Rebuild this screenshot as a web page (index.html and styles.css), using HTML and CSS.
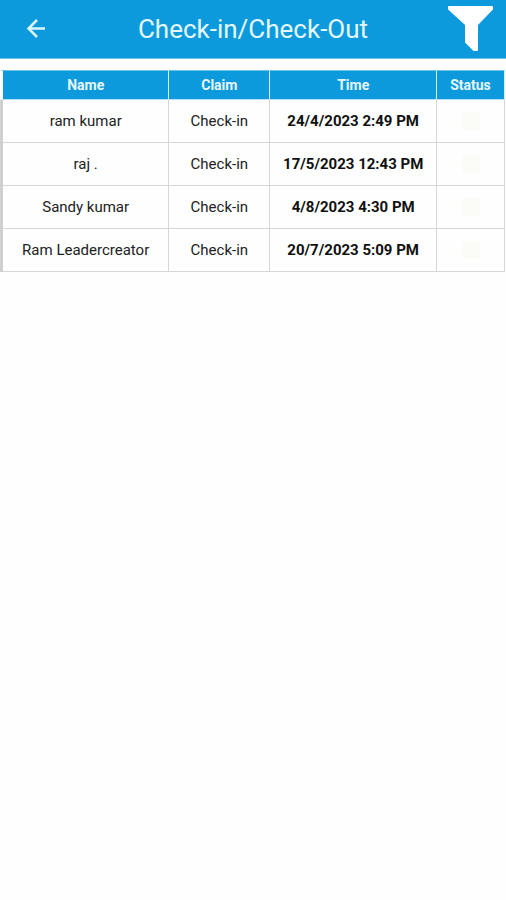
FILE: index.html
```html
<!DOCTYPE html>
<html lang="en">
<head>
    <meta charset="UTF-8">
    <meta name="viewport" content="width=device-width, initial-scale=1.0">
    <title>Check-in/Check-Out</title>
    <link rel="stylesheet" href="styles.css">
</head>
<body>

    <header class="topbar">
        <button class="back" aria-label="Back">
            <svg width="20" height="20" viewBox="0 0 20 20" fill="none" stroke="currentColor" stroke-width="2.5">
                <path d="M19 9.5H2M11 1L2.5 9.5L11 18"/>
            </svg>
        </button>
        <h1>Check-in/Check-Out</h1>
        <button class="filter" aria-label="Filter">
            <svg width="46" height="46" viewBox="0 0 46 46" fill="currentColor" stroke="currentColor" stroke-width="2" stroke-linejoin="round">
                <path d="M1 1H44V3L29 18.5V44H26L18 36V18.5L1 3Z"/>
            </svg>
        </button>
    </header>

    <table class="log">
        <thead>
            <tr>
                <th class="name">Name</th>
                <th class="claim">Claim</th>
                <th class="time">Time</th>
                <th class="status">Status</th>
            </tr>
        </thead>
        <tbody>
            <tr>
                <td>ram kumar</td>
                <td>Check-in</td>
                <td class="date">24/4/2023 2:49 PM</td>
                <td><span class="mark"></span></td>
            </tr>
            <tr>
                <td>raj .</td>
                <td>Check-in</td>
                <td class="date">17/5/2023 12:43 PM</td>
                <td><span class="mark"></span></td>
            </tr>
            <tr>
                <td>Sandy kumar</td>
                <td>Check-in</td>
                <td class="date">4/8/2023 4:30 PM</td>
                <td><span class="mark"></span></td>
            </tr>
            <tr>
                <td>Ram Leadercreator</td>
                <td>Check-in</td>
                <td class="date">20/7/2023 5:09 PM</td>
                <td><span class="mark"></span></td>
            </tr>
        </tbody>
    </table>

</body>
</html>
```

FILE: styles.css
```css
* {
    box-sizing: border-box;
}
body {
    margin: 0;
    background-color: #fefefe;
    font-family: Roboto, "Liberation Sans", sans-serif;
    color: #222;
}
.topbar {
    display: grid;
    grid-template-columns: 64px 1fr 64px;
    align-items: center;
    height: 59px;
    background-color: #0d9adc;
    border-bottom: 1px solid #6cc4ec;
    color: #fff;
}
.topbar h1 {
    margin: 0;
    font-size: 26px;
    font-weight: 400;
    line-height: 32px;
    text-align: center;
    color: #e4f8ff;
}
.topbar button {
    display: flex;
    padding: 0;
    border: none;
    background: none;
    color: inherit;
    cursor: pointer;
}
.topbar .back {
    justify-self: center;
    margin-left: 8px;
    color: #d9f5ff;
}
.topbar .filter {
    justify-self: start;
    margin-left: 6px;
}
.log {
    width: 100%;
    margin-top: 11px;
    padding-right: 1px;
    table-layout: fixed;
    border-collapse: separate;
    border-spacing: 0;
    font-size: 15px;
    line-height: 20px;
    text-align: center;
}
.log th {
    height: 30px;
    padding: 0;
    background-color: #0d9adc;
    background-clip: padding-box;
    border-top: 1px solid #6cc4ec;
    border-right: 1px solid #d5effa;
    border-bottom: 1px solid #b5dff3;
    font-size: 14px;
    font-weight: 700;
    color: #e6f8ff;
}
.log th:first-child {
    border-left: 3px solid transparent;
}
.log td {
    height: 43px;
    padding: 0;
    border-right: 1px solid #d6d6d6;
    border-bottom: 1px solid #d6d6d6;
}
.log td:first-child {
    border-left: 3px solid #d0d0d0;
}
.log .date {
    font-weight: 700;
    color: #111;
}
.claim {
    width: 20%;
}
.time {
    width: 33%;
}
.status {
    width: 68px;
}
.mark {
    display: block;
    width: 18px;
    height: 18px;
    margin: 0 auto;
    border-radius: 4px;
    background-color: #fbfbf8;
}
```
